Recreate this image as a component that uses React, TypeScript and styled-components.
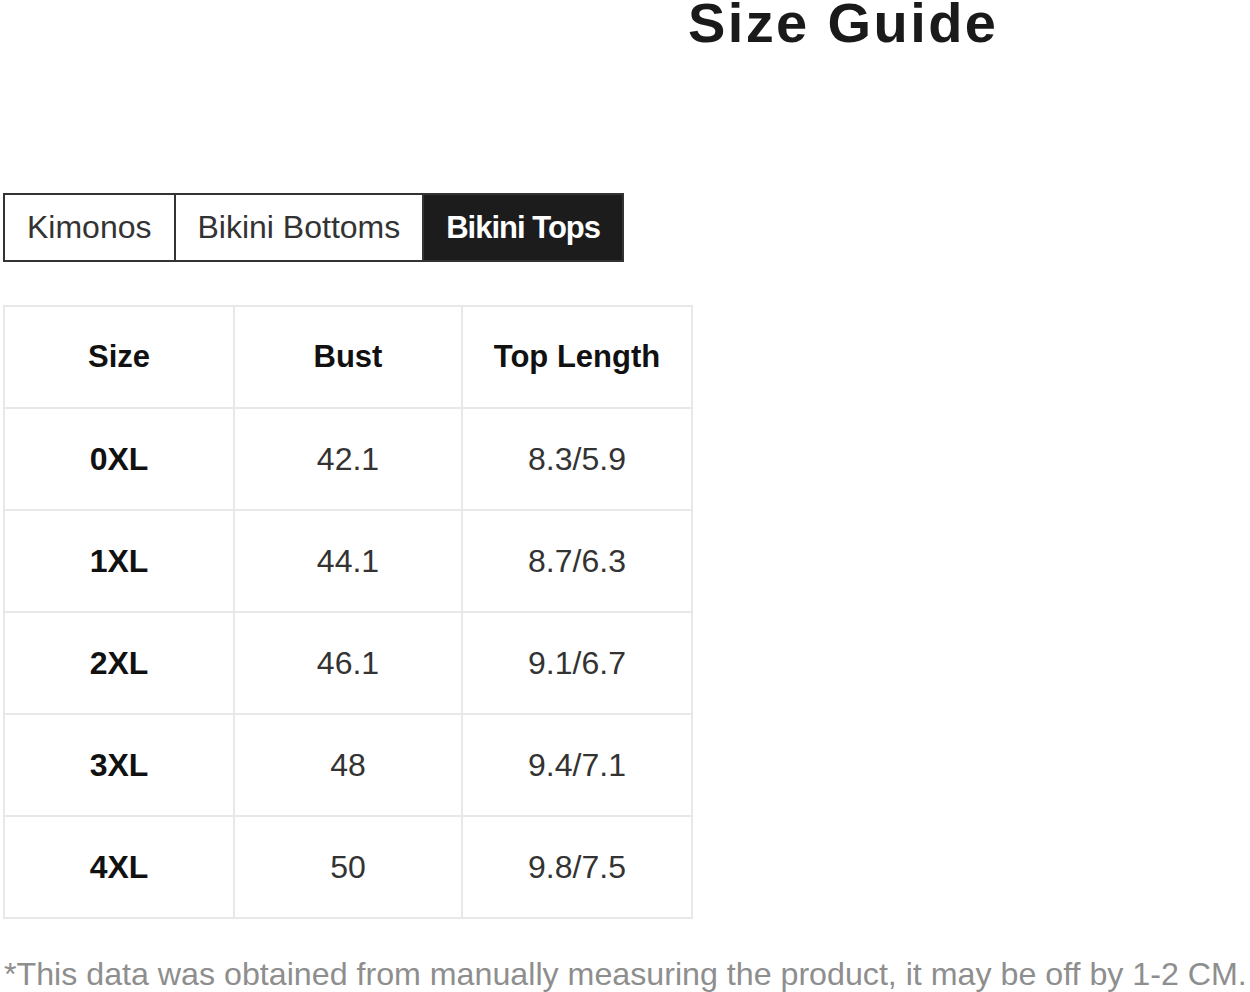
import * as React from 'react';
import styled, { createGlobalStyle } from 'styled-components';

const GlobalStyle = createGlobalStyle`
  html, body {
    margin: 0;
    padding: 0;
    background: #fff;
  }
  body {
    font-family: "Liberation Sans", Arial, sans-serif;
  }
`;

interface IRow {
  size: string;
  bust: string;
  length: string;
}

const rows: IRow[] = [
  { size: '0XL', bust: '42.1', length: '8.3/5.9' },
  { size: '1XL', bust: '44.1', length: '8.7/6.3' },
  { size: '2XL', bust: '46.1', length: '9.1/6.7' },
  { size: '3XL', bust: '48', length: '9.4/7.1' },
  { size: '4XL', bust: '50', length: '9.8/7.5' },
];

const tabs = ['Kimonos', 'Bikini Bottoms', 'Bikini Tops'];

const Page = styled.div`
  display: flex;
  flex-direction: column;
  align-items: flex-start;
  padding-left: 3px;
  width: 1250px;
  box-sizing: border-box;
  overflow: hidden;
`;

const Title = styled.h1`
  margin: -5px 0 0 0;
  padding-left: 685px;
  font-size: 56px;
  line-height: 56px;
  letter-spacing: 2.4px;
  font-weight: 700;
  color: #1a1a1a;
  white-space: nowrap;
`;

const TabBar = styled.div`
  display: flex;
  margin-top: 142px;
  border: 2px solid #333;
`;

const Tab = styled.div<{ $active?: boolean }>`
  height: 65px;
  line-height: 65px;
  padding: 0 22px;
  font-size: ${p => (p.$active ? 31 : 32)}px;
  white-space: nowrap;
  color: ${p => (p.$active ? '#fff' : '#333')};
  background: ${p => (p.$active ? '#1c1c1c' : '#fff')};
  font-weight: ${p => (p.$active ? 700 : 400)};
  letter-spacing: ${p => (p.$active ? '-1px' : '0')};
  & + & {
    border-left: 2px solid #333;
  }
`;

const Table = styled.table`
  margin-top: 43px;
  border-collapse: collapse;
  table-layout: fixed;
  width: 688px;
`;

const Cell = styled.td<{ $bold?: boolean; $head?: boolean }>`
  height: 100px;
  padding: 0;
  border: 2px solid #e8e8e8;
  text-align: center;
  vertical-align: middle;
  font-size: ${p => (p.$head ? 31 : 32)}px;
  font-weight: ${p => (p.$bold ? 700 : 400)};
  color: ${p => (p.$bold ? '#111' : '#333')};
`;

const Note = styled.p`
  margin: 37px 0 0 1px;
  font-size: 32.2px;
  color: #8e8e8e;
  white-space: nowrap;
`;

export default function App() {
  return (
    <>
      <GlobalStyle />
      <Page>
        <Title>Size Guide</Title>
        <TabBar>
          {tabs.map(t => (
            <Tab key={t} $active={t === 'Bikini Tops'}>{t}</Tab>
          ))}
        </TabBar>
        <Table>
          <colgroup>
            <col style={{ width: 230 }} />
            <col style={{ width: 228 }} />
            <col style={{ width: 230 }} />
          </colgroup>
          <thead>
            <tr>
              <Cell as="th" $bold $head>Size</Cell>
              <Cell as="th" $bold $head>Bust</Cell>
              <Cell as="th" $bold $head>Top Length</Cell>
            </tr>
          </thead>
          <tbody>
            {rows.map(r => (
              <tr key={r.size}>
                <Cell $bold>{r.size}</Cell>
                <Cell>{r.bust}</Cell>
                <Cell>{r.length}</Cell>
              </tr>
            ))}
          </tbody>
        </Table>
        <Note>*This data was obtained from manually measuring the product, it may be off by 1-2 CM.</Note>
      </Page>
    </>
  );
}
